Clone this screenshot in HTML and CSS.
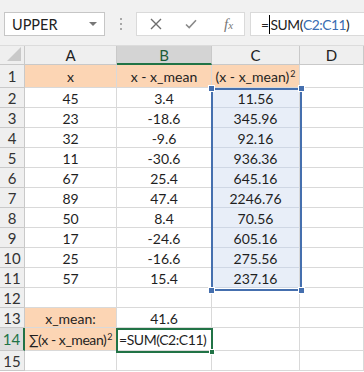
FILE: index.html
```html
<!DOCTYPE html>
<html>
<head>
<meta charset="utf-8">
<link rel="stylesheet" href="styles.css">
</head>
<body>
<div class="toolbar">
  <div class="namebox"><span class="name">UPPER</span><span class="caret"></span></div>
  <div class="dots"><i></i><i></i><i></i></div>
  <div class="btns">
    <svg class="ic-x" width="12" height="12" viewBox="0 0 12 12"><path d="M1 1L11 11M11 1L1 11" stroke="#6d6d6d" stroke-width="1.4" fill="none"/></svg>
    <svg class="ic-ok" width="12" height="10" viewBox="0 0 12 10"><path d="M1 5.5L4.2 8.6L11 1.2" stroke="#8a8a8a" stroke-width="1.6" fill="none"/></svg>
    <span class="fx">f<span class="fxx">x</span></span>
  </div>
  <div class="formula">=<span class="cursor"></span>SUM(<span class="ref">C2:C11</span>)</div>
</div>
<div class="sheet">
  <div class="hd corner"><svg width="16" height="16" viewBox="0 0 16 16"><path d="M15 1V15H1Z" fill="#c9c9c9"/></svg></div>
  <div class="hd col">A</div>
  <div class="hd col colsel">B</div>
  <div class="hd col">C</div>
  <div class="hd col">D</div>

  <div class="hd row">1</div>
  <div class="c or">x</div>
  <div class="c or">x - x_mean</div>
  <div class="c or">(x - x_mean)<sup>2</sup></div>
  <div class="c"></div>

  <div class="hd row">2</div><div class="c">45</div><div class="c">3.4</div><div class="c bl">11.56</div><div class="c"></div>
  <div class="hd row">3</div><div class="c">23</div><div class="c">-18.6</div><div class="c bl">345.96</div><div class="c"></div>
  <div class="hd row">4</div><div class="c">32</div><div class="c">-9.6</div><div class="c bl">92.16</div><div class="c"></div>
  <div class="hd row">5</div><div class="c">11</div><div class="c">-30.6</div><div class="c bl">936.36</div><div class="c"></div>
  <div class="hd row">6</div><div class="c">67</div><div class="c">25.4</div><div class="c bl">645.16</div><div class="c"></div>
  <div class="hd row">7</div><div class="c">89</div><div class="c">47.4</div><div class="c bl">2246.76</div><div class="c"></div>
  <div class="hd row">8</div><div class="c">50</div><div class="c">8.4</div><div class="c bl">70.56</div><div class="c"></div>
  <div class="hd row">9</div><div class="c">17</div><div class="c">-24.6</div><div class="c bl">605.16</div><div class="c"></div>
  <div class="hd row">10</div><div class="c">25</div><div class="c">-16.6</div><div class="c bl">275.56</div><div class="c"></div>
  <div class="hd row">11</div><div class="c">57</div><div class="c">15.4</div><div class="c bl">237.16</div><div class="c"></div>
  <div class="hd row">12</div><div class="c"></div><div class="c"></div><div class="c"></div><div class="c"></div>
  <div class="hd row">13</div><div class="c or">x_mean:</div><div class="c">41.6</div><div class="c"></div><div class="c"></div>
  <div class="hd row rowsel">14</div><div class="c or tight">∑(x - x_mean)<sup>2</sup></div><div class="c left tight">=SUM(C2:C11)</div><div class="c"></div><div class="c"></div>
  <div class="hd row">15</div><div class="c"></div><div class="c"></div><div class="c"></div><div class="c"></div>

  <div class="range">
    <span class="h tl"></span><span class="h tr"></span><span class="h bl2"></span><span class="h br"></span>
  </div>
  <div class="active"><span class="fill"></span></div>
</div>
</body>
</html>
```
FILE: styles.css
```css
* { box-sizing: border-box; }
html, body { margin: 0; padding: 0; background: #fff; }
body { width: 364px; height: 372px; overflow: hidden; font-family: Lato, "Liberation Sans", sans-serif; color: #1f1f1f; }

.toolbar {
  height: 46px;
  background: #f1f1f1;
  display: flex;
  align-items: flex-start;
  padding: 12px 0 0 4px;
  border-bottom: 1px solid #dcdcdc;
}
.namebox {
  width: 101px; height: 24px;
  background: #fff; border: 1px solid #c6c6c6;
  display: flex; align-items: center; justify-content: space-between;
  padding: 0 7px 0 7px;
  font-size: 14.5px; color: #222;
}
.caret { width: 0; height: 0; border-left: 4px solid transparent; border-right: 4px solid transparent; border-top: 4px solid #777; }
.dots { width: 31px; height: 24px; display: flex; flex-direction: column; align-items: center; justify-content: center; gap: 3px; }
.dots i { width: 2px; height: 2px; background: #a8a8a8; display: block; }
.btns {
  width: 109px; height: 24px; background: #fff; border: 1px solid #dadada;
  display: flex; align-items: center; padding-left: 13px;
}
.ic-x { margin-right: 23px; }
.ic-ok { margin-right: 27px; }
.fx { font-family: "Liberation Serif", serif; font-style: italic; font-size: 15px; color: #777; }
.fxx { font-size: 11px; }
.formula {
  flex: 1; margin-left: 5px; margin-right: -2px; height: 24px;
  background: #fff; border: 1px solid #dadada;
  display: flex; align-items: center; padding-left: 10px;
  font-size: 13.8px; color: #222; white-space: nowrap; letter-spacing: -0.45px;
}
.cursor { display: inline-block; width: 1px; height: 19px; background: #000; margin-right: 1px; }
.ref { color: #3a6db2; }

.sheet {
  position: relative;
  display: grid;
  grid-template-columns: 25px 92px 95px 88px 64px;
  grid-template-rows: 19px 23px repeat(12, 20px) 23px 20px;
  font-size: 14px;
}
.hd {
  background: #efefef;
  border-right: 1px solid #c9c9c9;
  border-bottom: 1px solid #c9c9c9;
  color: #222;
  display: flex; align-items: center; justify-content: center;
}
.corner { justify-content: flex-end; align-items: flex-end; padding: 0 2px 2px 0; }
.corner svg { display: block; }
.col { font-size: 15px; }
.colsel { background: #d4d4d4; border-bottom: 2px solid #217346; color: #1d5c38; }
.row { font-size: 15px; color: #333; }
.rowsel { background: #dedede; color: #217346; border-right: 2px solid #217346; }

.c {
  border-right: 1px solid #d9d9d9;
  border-bottom: 1px solid #d9d9d9;
  display: flex; align-items: center; justify-content: center;
  white-space: nowrap; overflow: hidden;
  padding-top: 1px;
}
.c sup { font-size: 9px; line-height: 0; position: relative; top: -3px; margin-left: 1px; }
.or { background: #fcd5b4; }
.bl { background: #e8eef8; border-bottom-color: #cfd7e4; }
.left { justify-content: flex-start; padding-left: 2px; }
.tight { letter-spacing: -0.45px; overflow: visible; }

.range {
  position: absolute; left: 211px; top: 42px; width: 91px; height: 203px;
  border: 2px solid #456fae;
}
.h { position: absolute; width: 7px; height: 7px; background: #456fae; border: 1px solid #fff; }
.tl { left: -5px; top: -5px; }
.tr { right: -5px; top: -5px; }
.bl2 { left: -5px; bottom: -5px; }
.br { right: -5px; bottom: -5px; }

.active {
  position: absolute; left: 116px; top: 282px; width: 97px; height: 25px;
  border: 2px solid #217346;
}
.fill { position: absolute; right: -4px; bottom: -4px; width: 6px; height: 6px; background: #217346; border: 1px solid #fff; }
```
